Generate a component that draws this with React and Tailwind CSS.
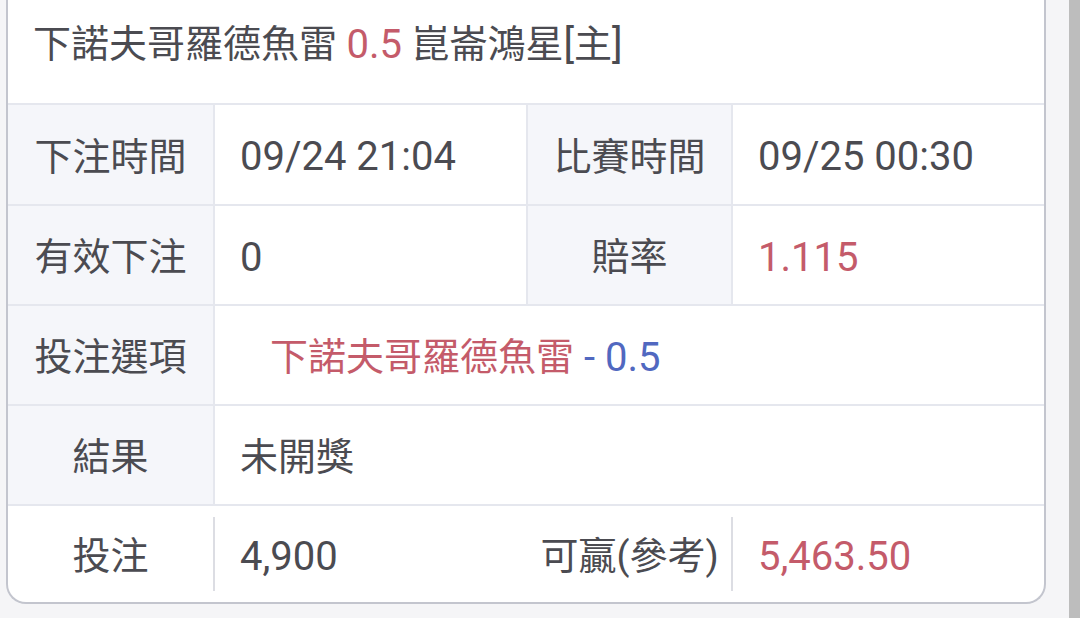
import React from 'react'

const label = 'flex items-center justify-center pt-[5px] bg-[#f5f6fa] text-[#4b4b51]'
const value = 'flex items-center pt-[5px] text-[#4b4b51]'
const line = 'border-[#e5e7ee]'

function Num({ children, className = '' }) {
  return <span className={`text-[40px] ${className}`}>{children}</span>
}

function App() {
  return (
    <div className="w-[1080px] h-[618px] bg-[#f5f5f7] flex overflow-hidden font-['Roboto','Noto_Sans_CJK_TC',sans-serif] text-[38px]">
      <div className="ml-[6px] w-[1040px] self-start bg-white border-x-2 border-b-2 border-[#c3c5ce] rounded-b-[20px] overflow-hidden">
        <div className="h-[103px] flex items-center pb-[14px] pl-[25px] text-[#4b4b51]">
          下諾夫哥羅德魚雷&nbsp;<Num className="text-[#c45b6a]">0.5</Num>&nbsp;崑崙鴻星<Num>[</Num>主<Num>]</Num>
        </div>

        <div className={`flex h-[101px] border-t-2 ${line}`}>
          <div className={`${label} w-[207px] border-r-2 ${line}`}>下注時間</div>
          <div className={`${value} w-[313px] pl-[25px] border-r-2 ${line}`}><Num>09/24 21:04</Num></div>
          <div className={`${label} w-[205px] border-r-2 ${line}`}>比賽時間</div>
          <div className={`${value} flex-1 pl-[25px]`}><Num>09/25 00:30</Num></div>
        </div>

        <div className={`flex h-[100px] border-t-2 ${line}`}>
          <div className={`${label} w-[207px] border-r-2 ${line}`}>有效下注</div>
          <div className={`${value} w-[313px] pl-[25px] border-r-2 ${line}`}><Num>0</Num></div>
          <div className={`${label} w-[205px] border-r-2 ${line}`}>賠率</div>
          <div className={`${value} flex-1 pl-[25px]`}><Num className="text-[#c45b6a]">1.115</Num></div>
        </div>

        <div className={`flex h-[100px] border-t-2 ${line}`}>
          <div className={`${label} w-[207px] border-r-2 ${line}`}>投注選項</div>
          <div className={`${value} flex-1 pl-[55px]`}>
            <span className="text-[#c45b6a]">下諾夫哥羅德魚雷</span>
            <Num className="text-[#5168c0]">&nbsp;- 0.5</Num>
          </div>
        </div>

        <div className={`flex h-[100px] border-t-2 ${line}`}>
          <div className={`${label} w-[207px] border-r-2 ${line}`}>結果</div>
          <div className={`${value} flex-1 pl-[25px]`}>未開獎</div>
        </div>

        <div className={`flex h-[98px] py-[11px] border-t-2 ${line}`}>
          <div className="flex items-center justify-center pt-[5px] w-[207px] border-r-2 border-[#dcdde3] text-[#4b4b51]">投注</div>
          <div className={`${value} w-[313px] pl-[25px]`}><Num>4,900</Num></div>
          <div className="flex items-center justify-center pt-[5px] w-[205px] border-r-2 border-[#dcdde3] text-[#4b4b51]">可贏(參考)</div>
          <div className={`${value} flex-1 pl-[25px]`}><Num className="text-[#c45b6a]">5,463.50</Num></div>
        </div>
      </div>
      <div className="flex-1" />
      <div className="w-[11px] h-full bg-[#bdbdbd]" />
    </div>
  )
}

export default App
